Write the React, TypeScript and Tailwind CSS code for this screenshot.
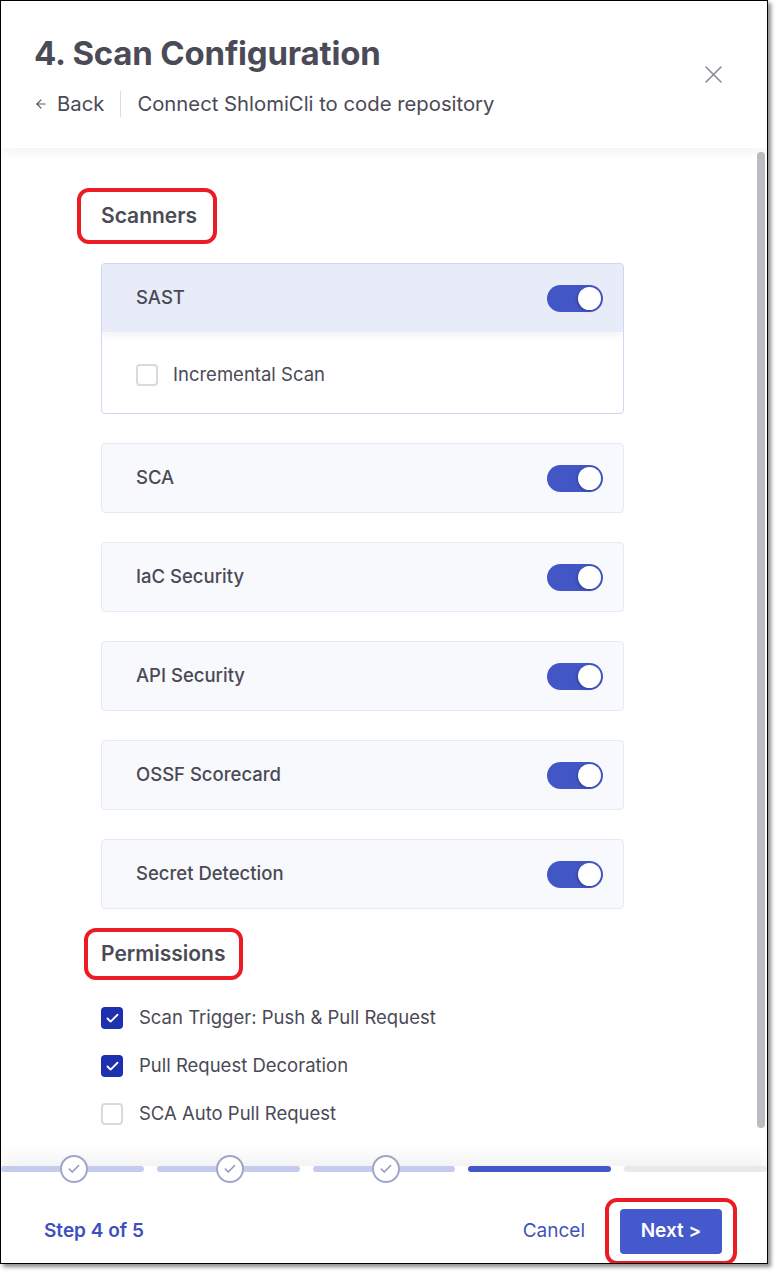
import { ArrowLeft, Check } from 'lucide-react';

const scanners = ['SCA', 'IaC Security', 'API Security', 'OSSF Scorecard', 'Secret Detection'];

const permissions = [
  { label: 'Scan Trigger: Push & Pull Request', checked: true },
  { label: 'Pull Request Decoration', checked: true },
  { label: 'SCA Auto Pull Request', checked: false },
];

function Toggle() {
  return (
    <div className="w-[56px] h-[27px] rounded-full bg-[#4356c5] flex items-center justify-end pr-[2px]">
      <div className="w-[23px] h-[23px] rounded-full bg-white shadow-[-1px_1px_3px_rgba(0,0,0,0.25)]" />
    </div>
  );
}

function Checkbox({ checked }: { checked: boolean }) {
  if (checked) {
    return (
      <div className="w-[22px] h-[22px] rounded-[4px] bg-[#1c30b0] flex items-center justify-center">
        <Check className="w-[15px] h-[15px] text-white" strokeWidth={3} />
      </div>
    );
  }
  return <div className="w-[22px] h-[22px] rounded-[4px] border-2 border-[#d9d9de] bg-white" />;
}

function Steps() {
  const segs = ['done', 'done', 'done', 'active', 'todo'];
  return (
    <div className="flex gap-[13px] h-[6px]">
      {segs.map((s, i) => (
        <div
          key={i}
          className={
            'relative flex-1 rounded-full ' +
            (s === 'done' ? 'bg-[#c5cbee]' : s === 'active' ? 'bg-[#4457c8]' : 'bg-[#e9e9ed]')
          }
        >
          {s === 'done' && (
            <div className="absolute left-1/2 top-1/2 -translate-x-1/2 -translate-y-1/2 ml-[2px] w-[28px] h-[28px] rounded-full border-2 border-[#a0a6c9] bg-white flex items-center justify-center">
              <Check className="w-[14px] h-[14px] text-[#8d93ba]" strokeWidth={2.5} />
            </div>
          )}
        </div>
      ))}
    </div>
  );
}

export default function App() {
  return (
    <div className="w-[776px] h-[1272px] bg-white" style={{ fontFamily: 'Inter, "Noto Sans", sans-serif' }}>
      <div className="w-[768px] h-[1264px] border border-black bg-white flex flex-col shadow-[3px_3px_4px_rgba(0,0,0,0.45)] overflow-hidden">
        {/* header */}
        <div className="relative z-10 h-[147px] shrink-0 bg-white px-[33px] pt-[31px] flex justify-between shadow-[0_4px_10px_rgba(0,0,0,0.05)]">
          <div>
            <h1 className="text-[33px] leading-[42px] font-bold text-[#4b4b57] tracking-[-0.2px]">4. Scan Configuration</h1>
            <div className="mt-[15px] flex items-center text-[20.3px] text-[#4a4a56]">
              <ArrowLeft className="w-[14px] h-[14px] text-[#55555f]" strokeWidth={2} />
              <span className="ml-[9px]">Back</span>
              <span className="mx-[16px] w-px h-[26px] bg-[#dcdce1]" />
              <span>Connect ShlomiCli to code repository</span>
            </div>
          </div>
          <button className="mt-[34px] mr-[12px] self-start text-[#8b8b96]">
            <svg width="17" height="17" viewBox="0 0 17 17" fill="none" stroke="currentColor" strokeWidth="1.6" strokeLinecap="round">
              <path d="M1 1L16 16M16 1L1 16" />
            </svg>
          </button>
        </div>

        {/* scroll area */}
        <div className="flex-1 flex min-h-0">
          <div className="flex-1 pl-[76px] pt-[40px]">
            <div className="inline-block border-4 border-[#ec1c24] rounded-[12px] pl-[20px] pr-[16px] py-[9px] text-[21px] leading-[30px] font-semibold text-[#4b4b57]">
              Scanners
            </div>

            <div className="ml-[24px] w-[523px] mt-[19px] flex flex-col gap-[29px]">
              <div className="rounded-[4px] border border-[#cfd6ef] overflow-hidden">
                <div className="relative h-[68px] bg-[#e8ebf8] pl-[34px] pr-[20px] flex items-center justify-between shadow-[0_4px_8px_rgba(0,0,0,0.05)]">
                  <span className="text-[18.5px] font-medium text-[#4a4a56]">SAST</span>
                  <Toggle />
                </div>
                <div className="h-[81px] pl-[34px] pt-[5px] flex items-center gap-[15px]">
                  <Checkbox checked={false} />
                  <span className="text-[18.5px] text-[#4a4a56]">Incremental Scan</span>
                </div>
              </div>

              {scanners.map((s) => (
                <div
                  key={s}
                  className="h-[70px] rounded-[4px] border border-[#e6eaf6] bg-[#f8f9fc] pl-[34px] pr-[20px] flex items-center justify-between"
                >
                  <span className="text-[18.5px] font-medium text-[#4a4a56]">{s}</span>
                  <Toggle />
                </div>
              ))}
            </div>

            <div className="mt-[19px] ml-[7px] inline-block border-4 border-[#ec1c24] rounded-[12px] pl-[13px] pr-[13px] py-[6px] text-[21px] leading-[32px] font-semibold text-[#4b4b57]">
              Permissions
            </div>

            <div className="ml-[24px] mt-[27px] flex flex-col gap-[26px]">
              {permissions.map((p) => (
                <div key={p.label} className="flex items-center gap-[16px] h-[22px]">
                  <Checkbox checked={p.checked} />
                  <span className="text-[18.5px] text-[#4a4a56]">{p.label}</span>
                </div>
              ))}
            </div>
          </div>
          <div className="w-[10px] pt-[4px] pb-[38px] pr-[1px]">
            <div className="h-full w-[8px] rounded-full bg-[#bdbcc3]" />
          </div>
        </div>

        {/* footer */}
        <div className="relative shrink-0 bg-white shadow-[0_-10px_16px_rgba(0,0,0,0.05)]">
          <Steps />
          <div className="h-[91px] pt-[28px] pl-[43px] pr-[30px] flex items-center justify-between">
            <span className="text-[19px] font-semibold text-[#3d50bf]">Step 4 of 5</span>
            <div className="flex items-center">
              <button className="text-[19px] text-[#4152b9] mr-[20px]">Cancel</button>
              <div className="border-4 border-[#ec1c24] rounded-[12px] px-[11px] py-[7px]">
                <button className="w-[102px] h-[45px] rounded-[4px] bg-[#4459cb] text-white text-[19px] font-semibold">
                  Next &gt;
                </button>
              </div>
            </div>
          </div>
        </div>
      </div>
    </div>
  );
}
